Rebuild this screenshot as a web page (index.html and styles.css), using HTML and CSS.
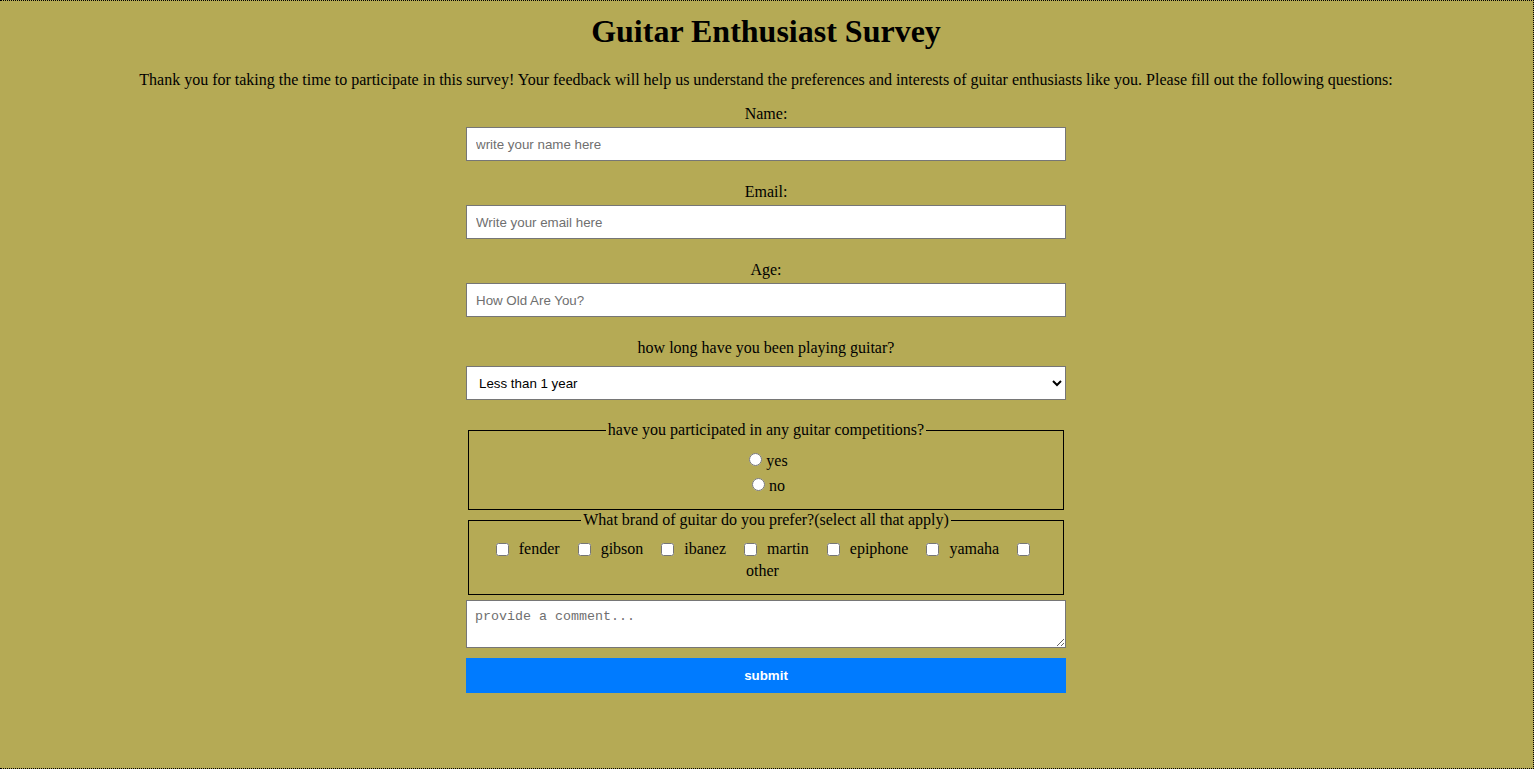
FILE: index.html
```html
<!DOCTYPE html>
<html lang="en">
<head>
<meta charset="utf-8">
<title>Guitar Enthusiast Survey</title>
<link rel="stylesheet" href="styles.css">
</head>
<body>
<h1 class="title">Guitar Enthusiast Survey</h1>
<p class="intro">Thank you for taking the time to participate in this survey! Your feedback will help us understand the preferences and interests of guitar enthusiasts like you. Please fill out the following questions:</p>
<form class="survey">
  <label class="field-label" for="name">Name:</label>
  <input class="text-input" id="name" type="text" placeholder="write your name here">
  <label class="field-label" for="email">Email:</label>
  <input class="text-input" id="email" type="email" placeholder="Write your email here">
  <label class="field-label" for="age">Age:</label>
  <input class="text-input" id="age" type="text" placeholder="How Old Are You?">
  <label class="field-label select-label" for="years">how long have you been playing guitar?</label>
  <select class="select-input" id="years">
    <option>Less than 1 year</option>
    <option>1-3 years</option>
    <option>3-5 years</option>
    <option>More than 5 years</option>
  </select>
  <fieldset class="group radios">
    <legend class="group-legend">have you participated in any guitar competitions?</legend>
    <div class="radio-option"><input type="radio" name="comp" id="yes"><label for="yes">yes</label></div>
    <div class="radio-option"><input type="radio" name="comp" id="no"><label for="no">no</label></div>
  </fieldset>
  <fieldset class="group checks">
    <legend class="group-legend">What brand of guitar do you prefer?(select all that apply)</legend>
    <div class="check-row">
      <input type="checkbox" id="fender"> <label class="check-label" for="fender">fender</label>
      <input type="checkbox" id="gibson"> <label class="check-label" for="gibson">gibson</label>
      <input type="checkbox" id="ibanez"> <label class="check-label" for="ibanez">ibanez</label>
      <input type="checkbox" id="martin"> <label class="check-label" for="martin">martin</label>
      <input type="checkbox" id="epiphone"> <label class="check-label" for="epiphone">epiphone</label>
      <input type="checkbox" id="yamaha"> <label class="check-label" for="yamaha">yamaha</label>
      <input class="check-last" type="checkbox" id="other"> <label class="check-label" for="other">other</label>
    </div>
  </fieldset>
  <textarea class="comment" placeholder="provide a comment..."></textarea>
  <button class="submit" type="submit">submit</button>
</form>
</body>
</html>
```
FILE: styles.css
```css
html {
  height: 100%;
}
body {
  margin: 0;
  padding-right: 1px;
  min-height: 100%;
  box-sizing: border-box;
  border: 1px dotted #000;
  border-left: 0;
  background: #b5aa55;
  font-family: "Liberation Serif", "Times New Roman", serif;
  font-size: 16px;
  color: #000;
  text-align: center;
}
.title {
  font-size: 32px;
  font-weight: bold;
  margin: 12px 0 21.44px;
}
.intro {
  margin: 16px 0;
}
.survey {
  width: 600px;
  margin: 0 auto;
  display: flex;
  flex-direction: column;
}
.field-label {
  display: block;
  margin-bottom: 4px;
}
.select-label {
  margin-bottom: 9px;
}
.text-input,
.select-input {
  box-sizing: border-box;
  width: 100%;
  height: 34px;
  margin: 0 0 22px;
  padding: 8px 9px;
  border: 1px solid #767676;
  background: #fff;
  font-family: "Liberation Sans", Arial, sans-serif;
  font-size: 13.33px;
  color: #000;
}
.select-input {
  padding: 0 8px;
  margin-bottom: 21px;
}
.text-input::placeholder {
  color: #6f6f6f;
}
.group {
  margin: 0 2px;
  border: 1px solid #000;
  padding: 9px 12px 11px;
}
.group-legend {
  margin: 0 auto;
  padding: 0 2px;
}
.radio-option {
  height: 25px;
  line-height: 25px;
}
.radio-option input {
  margin: 3px 4px 0 5px;
}
.checks {
  margin-top: 1px;
  padding-top: 9px;
  padding-bottom: 12px;
}
.check-row {
  line-height: 22px;
}
.check-row input {
  margin: 3px 3px 3px 4px;
  vertical-align: -2px;
}
.check-row .check-last {
  margin-right: 10px;
}
.check-label {
  margin: 0 10px 0 3px;
}
.comment {
  box-sizing: border-box;
  display: block;
  width: 100%;
  height: 48px;
  margin: 5px 0 10px;
  padding: 8px;
  border: 1px solid #767676;
  font-family: "Liberation Mono", "Courier New", monospace;
  font-size: 13.33px;
}
.comment::placeholder {
  color: #6f6f6f;
}
.submit {
  height: 35px;
  width: 100%;
  border: none;
  background: #007bff;
  color: #fff;
  font-family: "Liberation Sans", Arial, sans-serif;
  font-size: 13.33px;
  font-weight: bold;
}
```
